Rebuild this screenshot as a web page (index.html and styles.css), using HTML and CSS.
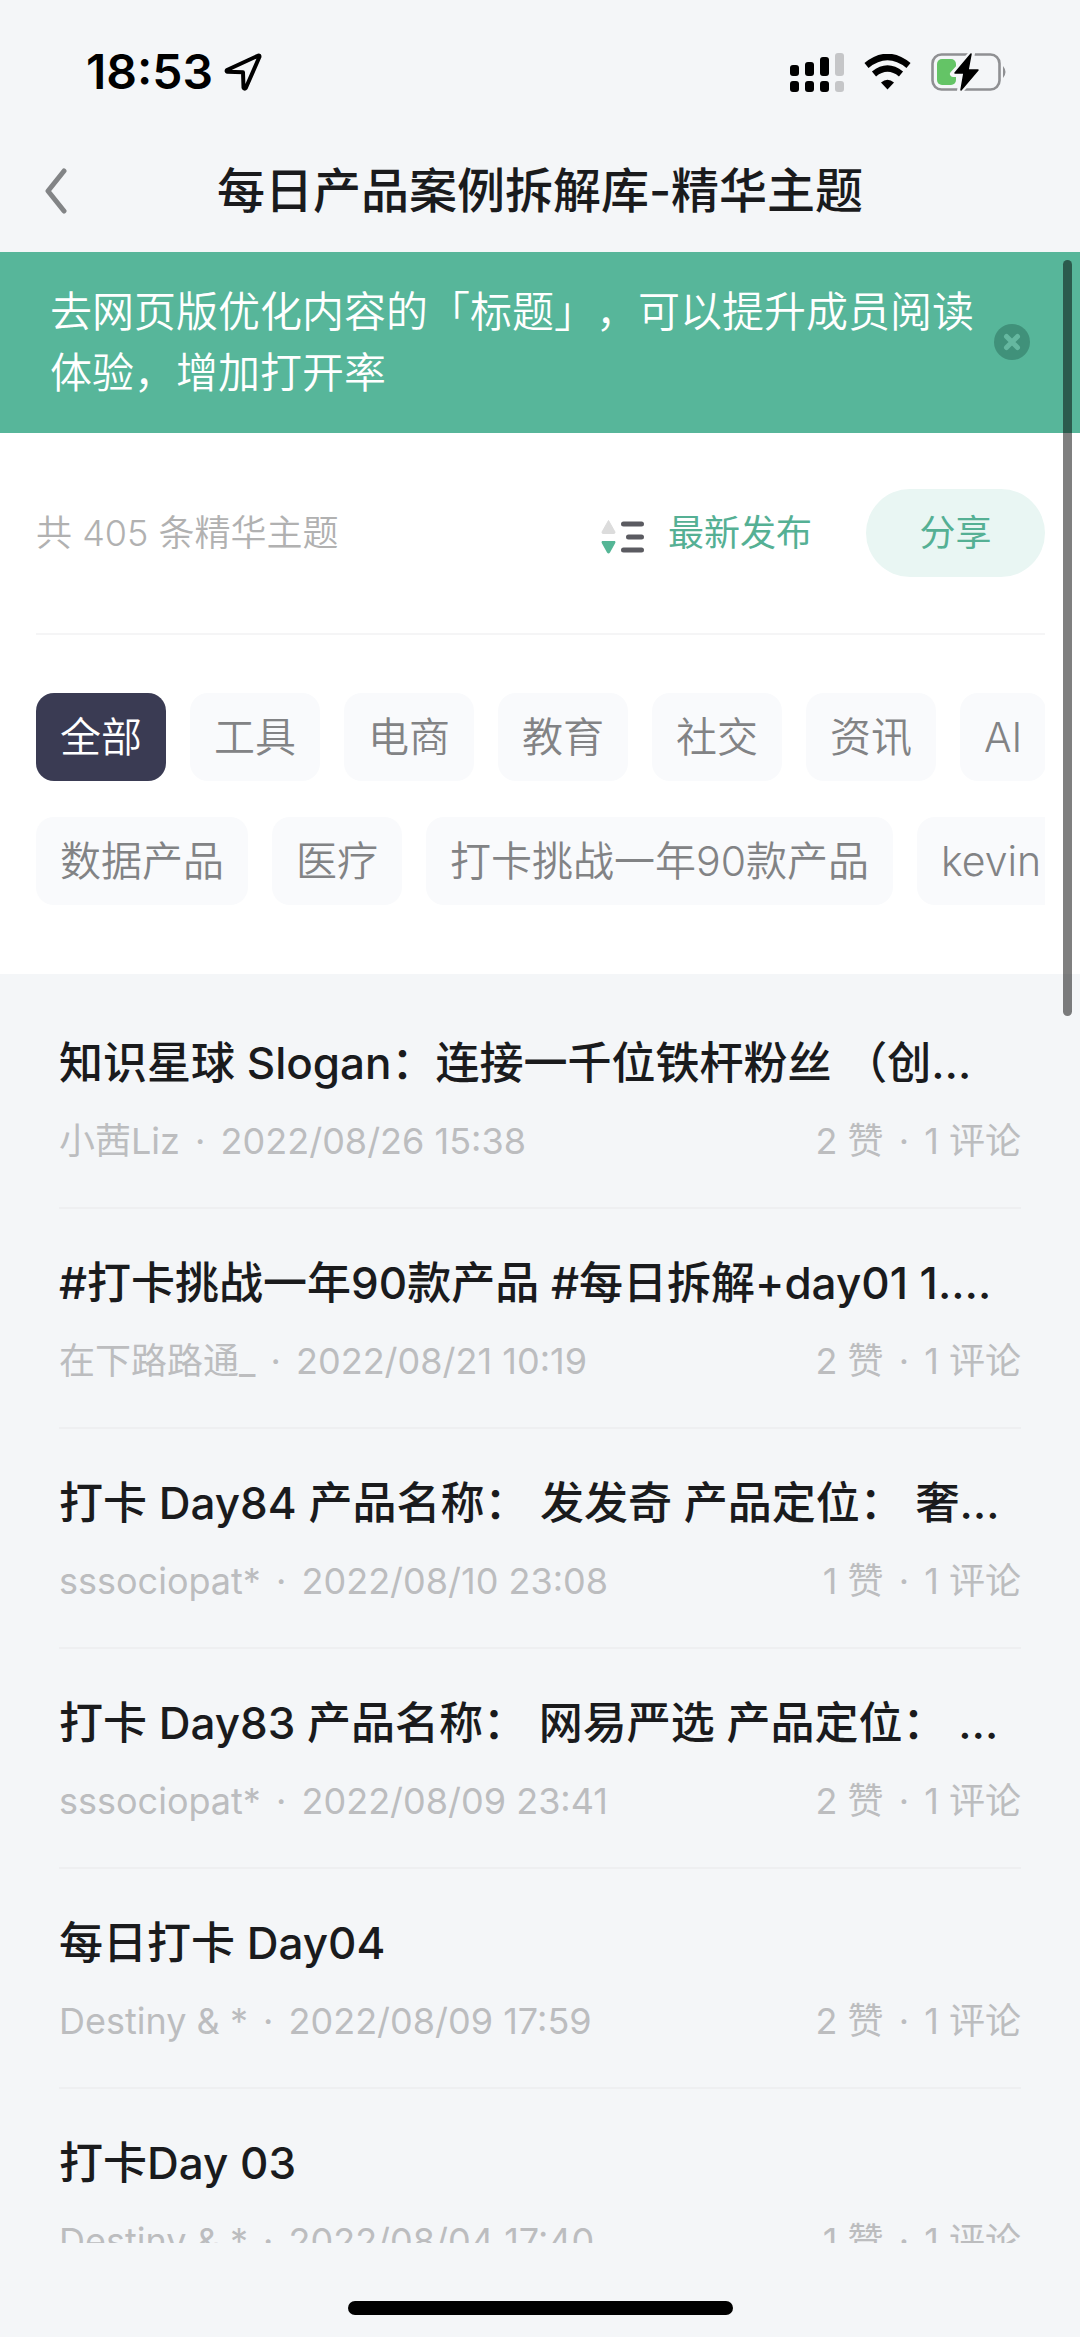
FILE: index.html
```html
<!DOCTYPE html>
<html lang="zh-CN">
<head>
<meta charset="utf-8">
<meta name="viewport" content="width=device-width, initial-scale=1">
<title>每日产品案例拆解库-精华主题</title>
<link rel="stylesheet" href="styles.css">
</head>
<body>
<div class="app">
  <div class="status-bar">
    <div class="status-left">
      <span class="clock">18:53</span>
      <svg class="icon-location" width="38" height="38" viewBox="0 0 38 38" aria-hidden="true"><path d="M34.500 2.500 L3 17 Q2 18.300 3.500 18.800 L19 19.300 L19.500 34.500 Q20.500 36.500 21.800 35 L35.500 3.800 Q35.500 2.500 34.500 2.500 Z" fill="none" stroke="#000" stroke-width="4" stroke-linejoin="round"/></svg>
    </div>
    <div class="status-right">
      <svg width="54" height="39" viewBox="0 0 54 39" aria-hidden="true">
        <g fill="#000"><rect x="0" y="12" width="9" height="11" rx="3"/><rect x="15" y="9" width="9" height="14" rx="3"/><rect x="30" y="4" width="9" height="19" rx="3"/><rect x="0" y="28" width="9" height="11" rx="3"/><rect x="15" y="28" width="9" height="11" rx="3"/><rect x="30" y="28" width="9" height="11" rx="3"/></g>
        <g fill="#c5c6c8"><rect x="45" y="0" width="9" height="23" rx="3"/><rect x="45" y="28" width="9" height="11" rx="3"/></g>
      </svg>
      <svg width="47" height="36" viewBox="0 0 47 36" aria-hidden="true">
        <path d="M2.500 11.500 Q23.500 -5.500 44.500 11.500" fill="none" stroke="#000" stroke-width="6.500"/>
        <path d="M10 20 Q23.500 9 37 20" fill="none" stroke="#000" stroke-width="6.500"/>
        <path d="M17 28.500 Q23.500 23 30 28.500 L23.500 35.500 Z" fill="#000"/>
      </svg>
      <svg width="77" height="40" viewBox="0 0 77 40" aria-hidden="true">
        <rect x="1.500" y="2.500" width="67" height="35" rx="9" fill="none" stroke="#8f9093" stroke-width="2.600"/>
        <path d="M72 14 Q77 20 72 26 Z" fill="#8f9093"/>
        <rect x="6" y="7" width="19" height="26" rx="5" fill="#64c466"/>
        <path d="M41 1 L22 22 H32 L29 39 L49 17 H38 L41 1 Z" fill="#000" stroke="#f4f6f8" stroke-width="6" stroke-linejoin="round"/>
        <path d="M40 2 L24 21 H33 L30 38 L47 18 H37 L40 2 Z" fill="#000" stroke="#000" stroke-width="1.500" stroke-linejoin="round"/>
      </svg>
    </div>
  </div>

  <header class="nav-bar">
    <button class="back" type="button" aria-label="返回"><svg width="24" height="46" viewBox="0 0 24 46" aria-hidden="true"><path d="M20 3 L4 23 L20 43" fill="none" stroke="#828486" stroke-width="5" stroke-linecap="round" stroke-linejoin="round"/></svg></button>
    <h1 class="nav-title">每日产品案例拆解库-精华主题</h1>
  </header>

  <div class="viewport">
    <main class="content">
      <section class="notice">
        <p class="notice-text">去网页版优化内容的「标题」，可以提升成员阅读体验，增加打开率</p>
        <button class="notice-close" type="button" aria-label="关闭"><svg width="36" height="36" viewBox="0 0 36 36" aria-hidden="true"><circle cx="18" cy="18" r="18" fill="#40917a"/><path d="M12.500 12.500 L23.500 23.500 M23.500 12.500 L12.500 23.500" stroke="#65b8a0" stroke-width="5" stroke-linecap="round"/></svg></button>
      </section>

      <section class="panel">
        <div class="summary">
          <p class="count">共 405 条精华主题</p>
          <button class="sort" type="button">
            <svg class="sort-icon" width="43" height="36" viewBox="0 0 43 36" aria-hidden="true"><path d="M7.500 1.500 L14 13 Q14 14.500 13 14.500 H2 Q1 14.500 1 13 Z" fill="#dcdcdc" stroke="#dcdcdc" stroke-linejoin="round"/><path d="M1 22 H14 Q15 23 14 24.500 L9 33.500 Q7.500 35.500 6 33.500 L1 24.500 Q0 23 1 22 Z" fill="#55b696"/><path d="M22.500 5 H40.500 M27.500 18 H40.500 M22.500 31 H40.500" stroke="#5b5b61" stroke-width="5" stroke-linecap="round"/></svg>
            最新发布
          </button>
          <button class="share" type="button">分享</button>
        </div>
        <div class="filters">
          <div class="filter-row">
            <button class="chip chip-active" type="button">全部</button>
            <button class="chip" type="button">工具</button>
            <button class="chip" type="button">电商</button>
            <button class="chip" type="button">教育</button>
            <button class="chip" type="button">社交</button>
            <button class="chip" type="button">资讯</button>
            <button class="chip" type="button">AI</button>
          </div>
          <div class="filter-row">
            <button class="chip" type="button">数据产品</button>
            <button class="chip" type="button">医疗</button>
            <button class="chip" type="button">打卡挑战一年90款产品</button>
            <button class="chip" type="button">kevin</button>
          </div>
        </div>
      </section>

      <ul class="topics">
        <li class="topic"><a class="topic-link" href="#"><span class="topic-title">知识星球 Slogan：连接一千位铁杆粉丝 （创…</span><span class="topic-meta"><span>小茜Liz <span class="dot">·</span> 2022/08/26 15:38</span><span>2 赞 <span class="dot">·</span> 1 评论</span></span></a></li>
        <li class="topic"><a class="topic-link" href="#"><span class="topic-title">#打卡挑战一年90款产品 #每日拆解+day01 1.…</span><span class="topic-meta"><span>在下路路通_ <span class="dot">·</span> 2022/08/21 10:19</span><span>2 赞 <span class="dot">·</span> 1 评论</span></span></a></li>
        <li class="topic"><a class="topic-link" href="#"><span class="topic-title">打卡 Day84 产品名称： 发发奇 产品定位： 奢…</span><span class="topic-meta"><span>sssociopat* <span class="dot">·</span> 2022/08/10 23:08</span><span>1 赞 <span class="dot">·</span> 1 评论</span></span></a></li>
        <li class="topic"><a class="topic-link" href="#"><span class="topic-title">打卡 Day83 产品名称： 网易严选 产品定位： …</span><span class="topic-meta"><span>sssociopat* <span class="dot">·</span> 2022/08/09 23:41</span><span>2 赞 <span class="dot">·</span> 1 评论</span></span></a></li>
        <li class="topic"><a class="topic-link" href="#"><span class="topic-title">每日打卡 Day04</span><span class="topic-meta"><span>Destiny &amp; * <span class="dot">·</span> 2022/08/09 17:59</span><span>2 赞 <span class="dot">·</span> 1 评论</span></span></a></li>
        <li class="topic"><a class="topic-link" href="#"><span class="topic-title">打卡Day 03</span><span class="topic-meta"><span>Destiny &amp; * <span class="dot">·</span> 2022/08/04 17:40</span><span>1 赞 <span class="dot">·</span> 1 评论</span></span></a></li>
      </ul>
    </main>
    <div class="scroll-thumb"></div>
  </div>

  <footer class="home-area"><div class="home-indicator"></div></footer>
</div>
</body>
</html>
```
FILE: styles.css
```css
* {
  box-sizing: border-box;
}

body {
  margin: 0;
  background: #f4f6f8;
  color: #1a1b1d;
  font-family: Inter, "Noto Sans CJK SC", sans-serif;
  text-spacing-trim: space-all;
}

button {
  border: 0;
  padding: 0;
  background: none;
  color: inherit;
  font: inherit;
  white-space: nowrap;
  cursor: pointer;
}

svg {
  display: block;
  flex: none;
}

h1,
p,
ul {
  margin: 0;
  padding: 0;
}

.app {
  display: flex;
  flex-direction: column;
  height: 100vh;
}

/* Status bar */
.status-bar {
  display: flex;
  flex: none;
  justify-content: space-between;
  align-items: center;
  height: 144px;
  padding: 0 72px 0 86px;
  color: #000;
}

.status-left {
  display: flex;
  align-items: center;
  gap: 11px;
}

.clock {
  font-size: 48px;
  font-weight: 600;
  line-height: 60px;
}

.status-right {
  display: flex;
  align-items: center;
  gap: 20px;
}

/* Navigation bar */
.nav-bar {
  display: grid;
  flex: none;
  grid-template-columns: 80px 1fr 80px;
  align-items: center;
  height: 108px;
  padding-bottom: 14px;
}

.back {
  justify-self: end;
  padding: 0 12px;
}

.nav-title {
  font-size: 48px;
  font-weight: 500;
  line-height: 72px;
  text-align: center;
}

/* Scrolling area */
.viewport {
  position: relative;
  flex: 1;
  min-height: 0;
}

.content {
  height: 100%;
  overflow: hidden;
}

.scroll-thumb {
  position: absolute;
  top: 8px;
  right: 8px;
  width: 9px;
  height: 756px;
  border-radius: 5px;
  background: rgba(0, 0, 0, 0.5);
}

/* Notice */
.notice {
  display: flex;
  justify-content: space-between;
  align-items: center;
  padding: 29px 50px 30px;
  background: #57b69a;
  color: #fff;
}

.notice-text {
  flex: 1;
  max-width: 926px;
  font-size: 42px;
  font-weight: 350;
  line-height: 61px;
}

/* Summary and filters */
.panel {
  padding: 0 35px 69px 36px;
  background: #fff;
}

.summary {
  display: flex;
  align-items: center;
  height: 202px;
  border-bottom: 2px solid #f5f5f6;
  font-size: 36px;
  line-height: 54px;
}

.count {
  flex: 1;
  color: #b1b1b1;
  font-weight: 350;
}

.sort {
  display: flex;
  align-items: center;
  gap: 24px;
  margin-right: 54px;
  color: #55b094;
  font-weight: 400;
}

.sort-icon {
  margin-top: 8px;
}

.share {
  width: 179px;
  height: 88px;
  border-radius: 44px;
  background: #e9f6f3;
  color: #55b094;
  font-weight: 400;
}

.filters {
  display: grid;
  gap: 36px;
  padding-top: 58px;
}

.filter-row {
  display: flex;
  gap: 24px;
  overflow: hidden;
}

.chip {
  flex: none;
  height: 88px;
  padding: 0 24px;
  border-radius: 18px;
  background: #f9fafc;
  color: #828385;
  font-size: 41px;
  font-weight: 350;
  line-height: 60px;
}

.chip-active {
  background: #3a3b53;
  color: #fff;
}

/* Topic list */
.topics {
  padding: 15px 59px 0;
  list-style: none;
}

.topic {
  border-bottom: 2px solid #eeeff1;
}

.topic-link {
  display: grid;
  gap: 18px;
  padding: 41px 0 39px;
  color: inherit;
  text-decoration: none;
}

.topic-title {
  overflow: hidden;
  font-size: 44px;
  font-weight: 500;
  line-height: 66px;
  text-overflow: ellipsis;
  white-space: nowrap;
}

.topic-meta {
  display: flex;
  justify-content: space-between;
  color: #bcbdbf;
  font-size: 36px;
  font-weight: 400;
  line-height: 54px;
}

.dot {
  margin: 0 5px;
}

/* Home indicator */
.home-area {
  display: flex;
  flex: none;
  justify-content: center;
  padding: 58px 0 22px;
}

.home-indicator {
  width: 385px;
  height: 14px;
  border-radius: 7px;
  background: #000;
}
```
